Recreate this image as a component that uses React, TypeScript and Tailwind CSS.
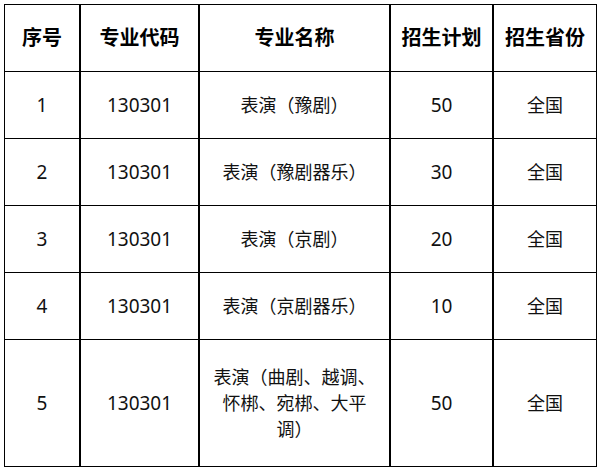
import React from 'react';

type Row = { no: string; code: string; name: React.ReactNode; plan: string; area: string };

const rows: Row[] = [
  { no: '1', code: '130301', name: '表演（豫剧）', plan: '50', area: '全国' },
  { no: '2', code: '130301', name: '表演（豫剧器乐）', plan: '30', area: '全国' },
  { no: '3', code: '130301', name: '表演（京剧）', plan: '20', area: '全国' },
  { no: '4', code: '130301', name: '表演（京剧器乐）', plan: '10', area: '全国' },
  { no: '5', code: '130301', name: '表演（曲剧、越调、怀梆、宛梆、大平调）', plan: '50', area: '全国' },
];

const grid = 'grid grid-cols-[74px_119px_191px_103px_104px]';
const cell = 'flex items-center justify-center text-center';

const App: React.FC = () => {
  return (
    <div
      className="w-[602px] h-[468px] bg-white pt-[4px] pl-[4px] text-[#111]"
      style={{ fontFamily: '"Noto Sans", "Noto Sans CJK SC", sans-serif' }}
    >
      <div className="w-[593px] border border-black">
        {/* header */}
        <div className={`${grid} h-[66px] text-[20px] font-bold text-black`}>
          <div className={cell}>序号</div>
          <div className={`${cell} border-l-2 border-black`}>专业代码</div>
          <div className={`${cell} border-l-2 border-black`}>专业名称</div>
          <div className={`${cell} border-l-2 border-black`}>招生计划</div>
          <div className={`${cell} border-l-2 border-black`}>招生省份</div>
        </div>

        {rows.map((r, i) => (
          <div
            key={r.no}
            className={`${grid} border-t border-black text-[18px] ${i === rows.length - 1 ? 'h-[127px]' : 'h-[67px]'}`}
          >
            <div className={`${cell} text-[19px]`}>{r.no}</div>
            <div className={`${cell} border-l-2 border-black text-[19px]`}>{r.code}</div>
            <div className={`${cell} border-l-2 border-black px-[10px] leading-[26px]`}>{r.name}</div>
            <div className={`${cell} border-l-2 border-black text-[19px]`}>{r.plan}</div>
            <div className={`${cell} border-l-2 border-black`}>{r.area}</div>
          </div>
        ))}
      </div>
    </div>
  );
};

export default App;
